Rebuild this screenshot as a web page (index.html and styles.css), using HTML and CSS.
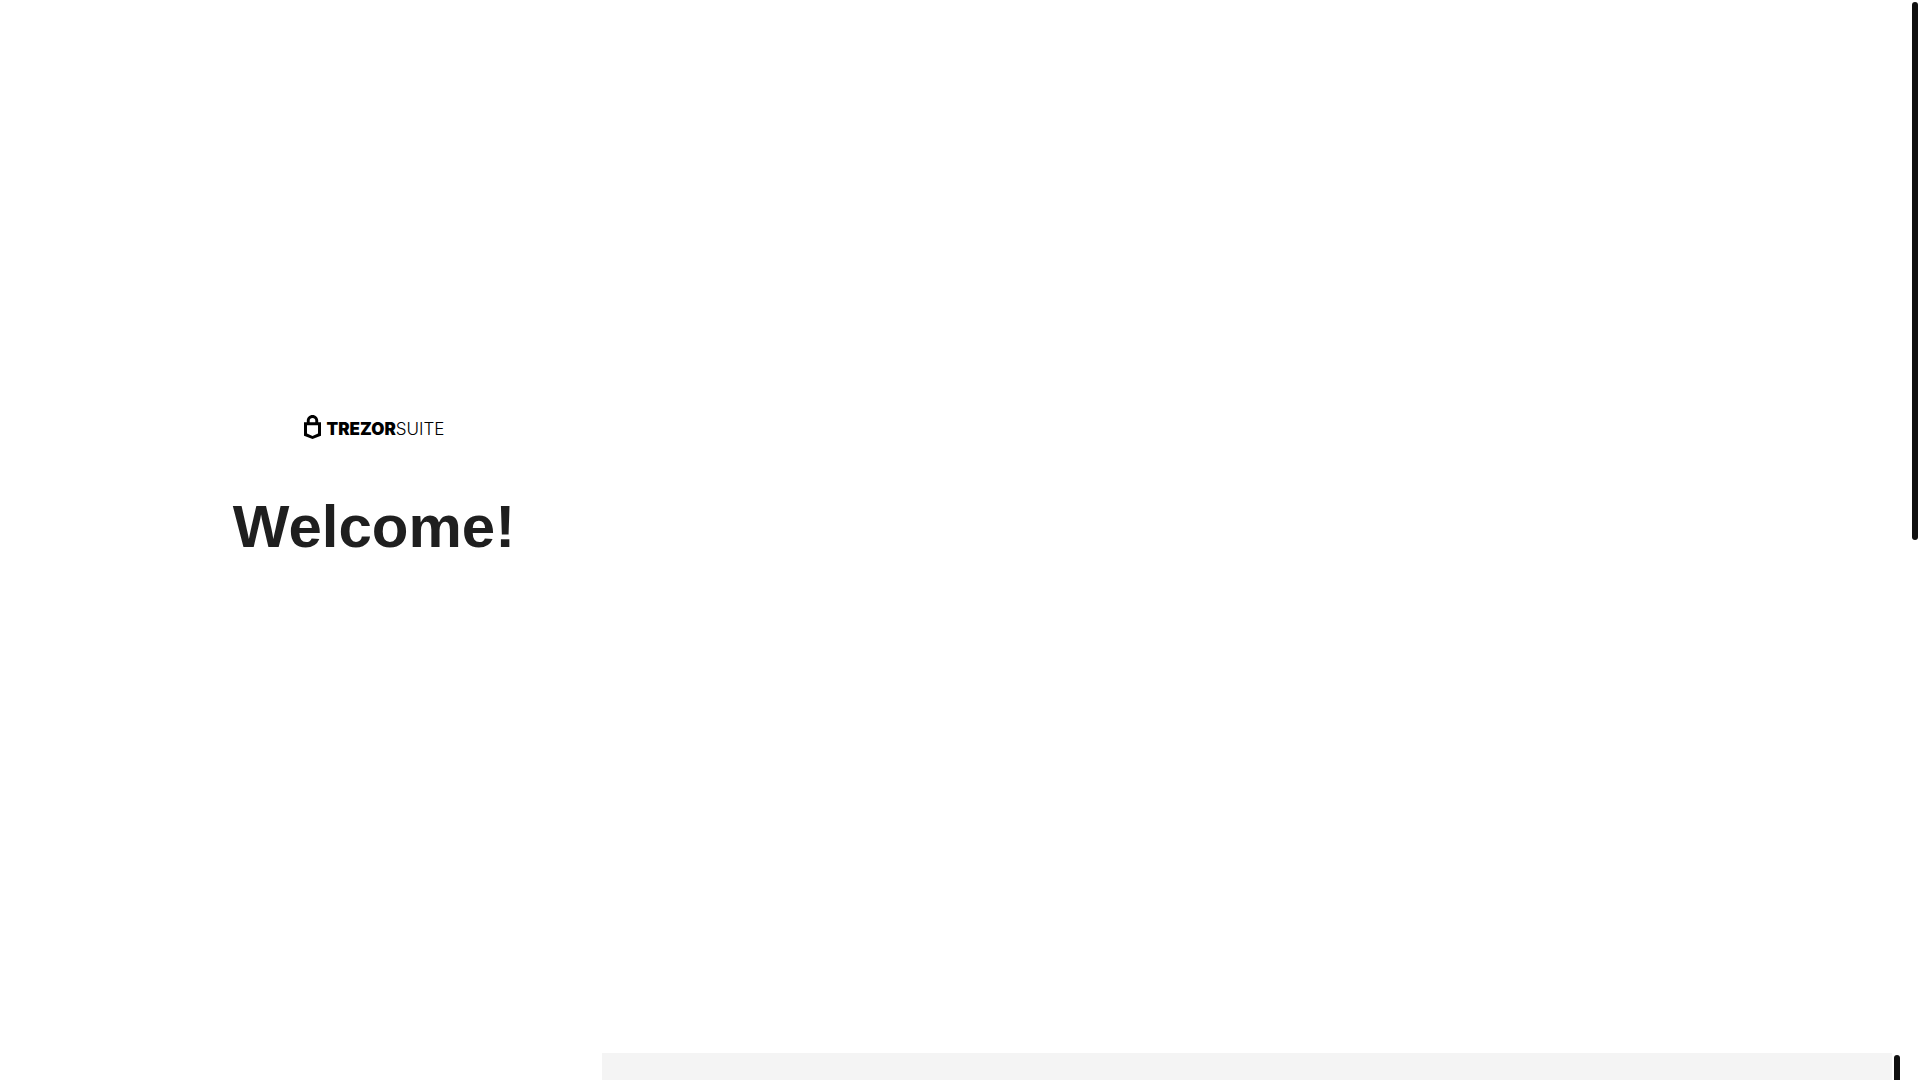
FILE: index.html
```
<!DOCTYPE html>
<html lang="en">
<head>
<meta charset="utf-8">
<title>Trezor Suite</title>
<link rel="stylesheet" href="styles.css">
</head>
<body>
<div class="app">
  <aside class="welcome">
    <div class="logo">
      <svg class="logo-mark" viewBox="0 0 17 24" aria-hidden="true">
        <path fill="currentColor" fill-rule="evenodd" d="M8.5 0C5.3 0 2.8 2.5 2.8 5.6V7.3H0V20.7L8.5 24L17 20.7V7.3H14.2V5.6C14.2 2.5 11.7 0 8.5 0ZM8.5 2.9C10.2 2.9 11.3 4 11.3 5.6V7.3H5.7V5.6C5.7 4 6.8 2.9 8.5 2.9ZM3 10.3H14V18.5L8.5 20.9L3 18.5Z"/>
      </svg>
      <span class="logo-text"><b class="brand">TREZOR</b><span class="product">SUITE</span></span>
    </div>
    <h1 class="title">Welcome!</h1>
  </aside>
  <main class="content">
    <section class="panel"></section>
    <div class="scrollbar scrollbar-inner"><div class="thumb"></div></div>
  </main>
  <div class="scrollbar"><div class="thumb thumb-half"></div></div>
</div>
</body>
</html>
```
FILE: styles.css
```
* {
  box-sizing: border-box;
}

body {
  margin: 0;
  background: #fff;
  color: #1f1f1f;
  font-family: "Liberation Sans", Arial, sans-serif;
}

.app {
  display: flex;
  height: 100vh;
  overflow: hidden;
}

.welcome {
  flex: 0 0 602px;
  display: flex;
  flex-direction: column;
  align-items: center;
  justify-content: center;
  gap: 52px;
  padding: 0 0 102px 146px;
}

.logo {
  display: flex;
  align-items: center;
  gap: 6px;
  color: #000;
}

.logo-mark {
  width: 17px;
  height: 24px;
}

.logo-text {
  padding-top: 4px;
  font-family: Inter, sans-serif;
  font-size: 17px;
  line-height: 20px;
}

.brand {
  font-weight: 900;
}

.product {
  font-weight: 300;
}

.title {
  margin: 0;
  font-size: 60px;
  line-height: 72px;
  font-weight: 700;
}

.content {
  flex: 1;
  display: flex;
  align-items: flex-end;
  padding-right: 8px;
}

.panel {
  flex: 1;
  height: 27px;
  background: #f4f4f4;
}

.scrollbar {
  flex: 0 0 10px;
  height: 100%;
  padding: 2px;
}

.scrollbar-inner {
  height: 27px;
  padding-bottom: 0;
  overflow: hidden;
}

.thumb {
  height: 40px;
  border-radius: 3px;
  background: #101010;
}

.thumb-half {
  height: 50%;
}
```
